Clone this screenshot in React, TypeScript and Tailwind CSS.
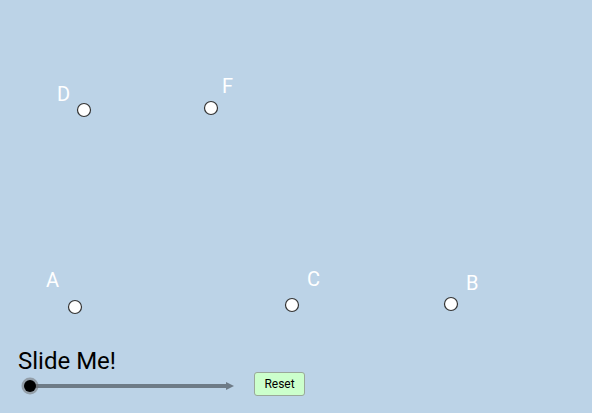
import React from "react";

const points = [
  { id: "D", cx: 84, cy: 110, lx: 57, ly: 82 },
  { id: "F", cx: 211, cy: 108, lx: 222, ly: 74 },
  { id: "A", cx: 75, cy: 307, lx: 46, ly: 268 },
  { id: "C", cx: 292, cy: 305, lx: 307, ly: 267 },
  { id: "B", cx: 451, cy: 304, lx: 466, ly: 271 },
];

export default function App() {
  return (
    <div
      className="relative w-[592px] h-[413px] overflow-hidden bg-[#bcd3e7]"
      style={{ fontFamily: "Roboto, 'Liberation Sans', sans-serif" }}
    >
      <svg className="absolute left-0 top-0" width="592" height="413">
        {points.map((p) => (
          <circle key={p.id} cx={p.cx} cy={p.cy} r="6.5" fill="#ffffff" stroke="#333333" strokeWidth="1.2" />
        ))}
        <line x1="30" y1="386" x2="228" y2="386" stroke="#6e7b87" strokeWidth="4" />
        <polygon points="226,382 234,386 226,390" fill="#6e7b87" />
        <circle cx="30" cy="386" r="8.5" fill="#6a6a6a" opacity="0.5" />
        <circle cx="30" cy="386" r="6" fill="#000000" />
      </svg>
      {points.map((p) => (
        <div
          key={p.id}
          className="absolute text-[20px] leading-[24px] text-white"
          style={{ left: p.lx, top: p.ly }}
        >
          {p.id}
        </div>
      ))}
      <div className="absolute left-[18px] top-[346px] text-[24px] leading-[30px] text-black">Slide Me!</div>
      <button className="absolute left-[254px] top-[372px] w-[51px] h-[24px] rounded-[3px] border border-[#9aa89a] bg-[#ccffcc] text-[12px] text-black leading-none">
        Reset
      </button>
    </div>
  );
}
